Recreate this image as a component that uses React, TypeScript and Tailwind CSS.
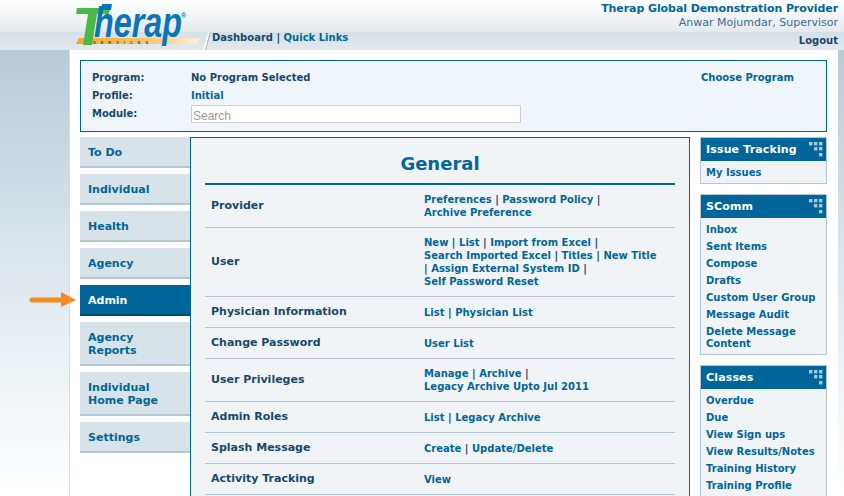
const tabs = [
  { label: ["To Do"] },
  { label: ["Individual"] },
  { label: ["Health"] },
  { label: ["Agency"] },
  { label: ["Admin"], active: true },
  { label: ["Agency", "Reports"] },
  { label: ["Individual", "Home Page"] },
  { label: ["Settings"] },
];

const rows: { name: string; lines: string[][] }[] = [
  { name: "Provider", lines: [["Preferences", "Password Policy", ""], ["Archive Preference"]] },
  {
    name: "User",
    lines: [
      ["New", "List", "Import from Excel", ""],
      ["Search Imported Excel", "Titles", "New Title"],
      ["", "Assign External System ID", ""],
      ["Self Password Reset"],
    ],
  },
  { name: "Physician Information", lines: [["List", "Physician List"]] },
  { name: "Change Password", lines: [["User List"]] },
  { name: "User Privileges", lines: [["Manage", "Archive", ""], ["Legacy Archive Upto Jul 2011"]] },
  { name: "Admin Roles", lines: [["List", "Legacy Archive"]] },
  { name: "Splash Message", lines: [["Create", "Update/Delete"]] },
  { name: "Activity Tracking", lines: [["View"]] },
];

const boxes = [
  { title: "Issue Tracking", items: ["My Issues"] },
  {
    title: "SComm",
    items: ["Inbox", "Sent Items", "Compose", "Drafts", "Custom User Group", "Message Audit", "Delete Message Content"],
  },
  {
    title: "Classes",
    items: ["Overdue", "Due", "View Sign ups", "View Results/Notes", "Training History", "Training Profile"],
  },
];

function Dots() {
  const pts = [
    [0, 0], [5, 0], [10, 0],
    [5, 5], [10, 5],
    [10, 11],
  ];
  return (
    <svg width="14" height="15" viewBox="0 0 14 15" className="shrink-0">
      {pts.map(([x, y]) => (
        <rect key={`${x}-${y}`} x={x} y={y} width="3.4" height="3.4" fill="#a9c6d8" />
      ))}
    </svg>
  );
}

function Logo() {
  return (
    <svg width="140" height="48" viewBox="0 0 140 48" className="absolute left-[72px] top-0">
      <defs>
        <linearGradient id="strip" x1="0" x2="1" y1="0" y2="0">
          <stop offset="0" stopColor="#f5a623" />
          <stop offset="0.55" stopColor="#f9c46b" />
          <stop offset="1" stopColor="#fbf0da" />
        </linearGradient>
      </defs>
      <polygon points="7,38 128,38 125,44 4,44" fill="url(#strip)" />
      <polygon points="5,8 38,8 37,14 25,14 20,45 11,45 16,14 4,14" fill="#4cb848" />
      <polygon points="30,4 40,4 39,10 29,10" fill="#0a74b8" />
      <text x="22" y="37" fontFamily="'Liberation Sans', sans-serif" fontWeight="700" fontStyle="italic" fontSize="42" fill="#0a74b8" textLength="88" lengthAdjust="spacingAndGlyphs">herap</text>
      <text x="21" y="43.5" fontFamily="'Liberation Sans', sans-serif" fontWeight="700" fontSize="4" letterSpacing="5" fill="#3b4a2a">SERVICES</text>
      <text x="109" y="18" fontFamily="'Liberation Sans', sans-serif" fontSize="7" fill="#0a74b8">®</text>
    </svg>
  );
}

export default function App() {
  return (
    <div className="relative h-[496px] w-[844px] overflow-hidden bg-white font-['DejaVu_Sans','Verdana',sans-serif] text-[10px] font-bold text-[#006699]">
      <header className="relative h-[50px]">
        <div className="flex h-[32px] flex-col items-end bg-gradient-to-b from-white to-[#e6e9ec] pr-[6px] pt-[2px] shadow-[0_1px_2px_#b5c0c8]">
          <div className="text-[11px] leading-[14px] tracking-[-0.08px] text-[#006699]">Therap Global Demonstration Provider</div>
          <div className="text-[11px] leading-[13px] font-normal text-[#336f96]">Anwar Mojumdar, Supervisor</div>
        </div>
        <div className="flex h-[18px] justify-between bg-gradient-to-b from-[#d5dfe6] to-[#e3e9ee] pl-[212px] pr-[6px] leading-[12px]">
          <div className="pt-[0px] text-[#16486b]">
            Dashboard <span className="text-[#16486b]">|</span> <span className="text-[#006699]">Quick Links</span>
          </div>
          <div className="pt-[3px] text-[#16486b]">Logout</div>
        </div>
        <svg width="12" height="18" viewBox="0 0 12 18" className="absolute left-[203px] top-[32px]">
          <polygon points="5,0 7,0 2,18 0,18" fill="#ffffff" opacity="0.85" />
          <polygon points="7,0 8,0 3,18 2,18" fill="#a7b4bd" />
        </svg>
        <Logo />
      </header>

      <div className="flex h-[446px]">
        <div className="w-[70px] shrink-0 border-r border-[#d3dfe7] bg-gradient-to-b from-[#b8ccd8] via-[#e6edf2] via-60% to-white" />
        <main className="w-[768px] shrink-0 overflow-hidden pl-[10px] pr-[11px] pt-[10px]">
          <section className="grid h-[72px] grid-cols-[99px_510px_1fr] grid-rows-[18px_18px_18px] content-center items-center border border-[#006699] bg-[#f0f5fc] pl-[11px] leading-[18px]">
            <div className="text-[#16486b]">Program:</div>
            <div className="text-[#16486b]">No Program Selected</div>
            <div>Choose Program</div>
            <div className="text-[#16486b]">Profile:</div>
            <div>Initial</div>
            <div />
            <div className="text-[#16486b]">Module:</div>
            <div className="col-span-2 flex h-[18px] w-[330px] items-center border border-[#cfcfcf] bg-white pl-[1px] pt-[3px] font-['Liberation_Sans',sans-serif] text-[12px] font-normal text-[#9a9a9a]">
              Search
            </div>
          </section>

          <div className="mt-[5px] flex">
            <nav className="flex w-[110px] shrink-0 flex-col gap-[6px]">
              {tabs.map((t) => (
                <div
                  key={t.label.join(" ")}
                  className={
                    t.active
                      ? "flex min-h-[31px] flex-col justify-center border-b-2 border-[#004a70] bg-[#006699] pl-[8px] pt-[1px] text-[11px] leading-[13px] text-white"
                      : "flex min-h-[31px] flex-col justify-center border-b-2 border-[#b5c7d3] bg-[#d7e2e9] px-[8px] pt-[1px] text-[11px] leading-[13px] text-[#006699]" +
                        (t.label.length > 1 ? " h-[44px]" : "")
                  }
                >
                  {t.label.map((l) => (
                    <span key={l}>{l}</span>
                  ))}
                </div>
              ))}
            </nav>

            <div className="h-[360px] w-[500px] shrink-0 border border-[#006699] bg-[#f1f4f7] px-[14px]">
              <h1 className="h-[47px] border-b-2 border-[#006699] pt-[13px] text-center text-[18px] leading-[26px] text-[#006699]">General</h1>
              {rows.map((r) => (
                <div key={r.name} className="flex items-center border-b border-[#b5c7d3] py-[8px] leading-[13px]">
                  <div className="w-[219px] shrink-0 pb-[1px] pl-[6px] text-[11px] text-[#16486b]">{r.name}</div>
                  <div className="whitespace-nowrap">
                    {r.lines.map((line, i) => (
                      <div key={i}>
                        {line.map((l, j) => (
                          <span key={j}>
                            {j > 0 && <span className="text-[#16486b]"> | </span>}
                            {l}
                          </span>
                        ))}
                      </div>
                    ))}
                  </div>
                </div>
              ))}
            </div>

            <aside className="ml-[10px] flex w-[127px] shrink-0 flex-col gap-[10px]">
              {boxes.map((b) => (
                <div key={b.title} className="border border-[#b5c7d3] bg-[#f1f4f7]">
                  <div className="flex h-[23px] items-center justify-between bg-[#006699] pl-[5px] pr-[3px] text-[11px] tracking-[0.15px] text-white">
                    <span className="pt-[2px]">{b.title}</span>
                    <Dots />
                  </div>
                  <div className="pl-[5px] pb-[2px] pt-[3px] leading-[12px]">
                    {b.items.map((it) => (
                      <div key={it} className="py-[2.5px]">{it}</div>
                    ))}
                  </div>
                </div>
              ))}
            </aside>
          </div>
        </main>
        <div className="w-[6px] shrink-0 bg-gradient-to-b from-[#b8ccd8] via-[#e6edf2] via-60% to-white" />
      </div>

      <svg width="48" height="16" viewBox="0 0 48 16" className="absolute left-[29px] top-[292px]">
        <path d="M3 8 H34" stroke="#f58a1f" strokeWidth="5" strokeLinecap="round" />
        <polygon points="32,0 47,8 32,15" fill="#f58a1f" />
      </svg>
    </div>
  );
}
